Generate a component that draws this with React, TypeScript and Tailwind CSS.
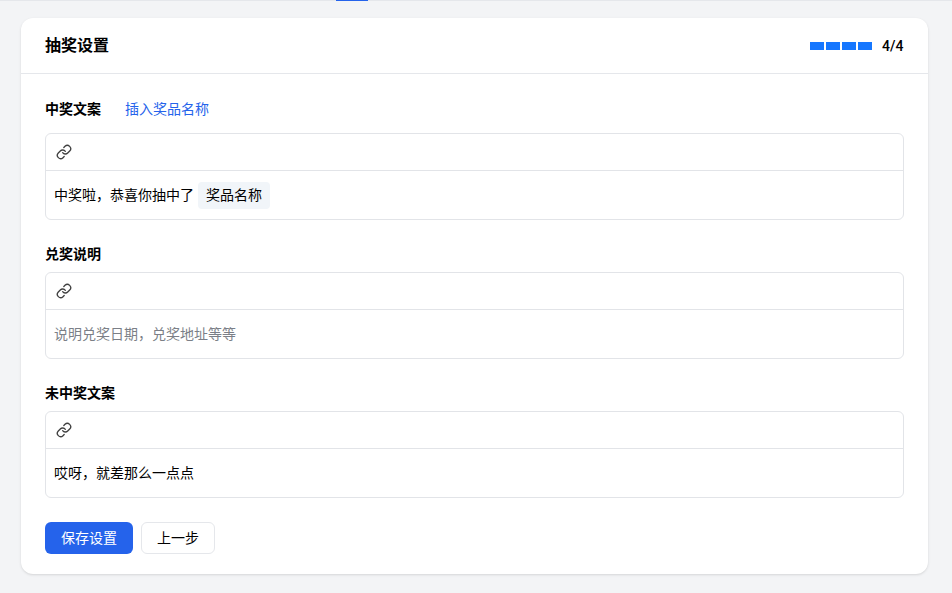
import React from "react";

function LinkIcon() {
  return (
    <svg width="16" height="16" viewBox="0 0 24 24" fill="none" stroke="#404040" strokeWidth="2" strokeLinecap="round" strokeLinejoin="round">
      <path d="M10 13a5 5 0 0 0 7.54.54l3-3a5 5 0 0 0-7.07-7.07l-1.72 1.71" />
      <path d="M14 11a5 5 0 0 0-7.54-.54l-3 3a5 5 0 0 0 7.07 7.07l1.71-1.71" />
    </svg>
  );
}

function Editor({ children }: { children: React.ReactNode }) {
  return (
    <div className="border border-[#e2e4e8] rounded-md bg-white">
      <div className="h-[37px] border-b border-[#e2e4e8] flex items-center px-[10px]">
        <LinkIcon />
      </div>
      <div className="h-[48px] flex items-center px-2 text-sm text-black">{children}</div>
    </div>
  );
}

export default function App() {
  return (
    <div
      className="min-h-[593px] bg-[#f3f4f6] overflow-hidden subpixel-antialiased"
      style={{ fontFamily: '"Roboto", "Noto Sans CJK SC", sans-serif' }}
    >
      <div className="h-px bg-[#e5e7eb]">
        <div className="h-px w-8 ml-[336px] bg-[#2563eb]" />
      </div>
      <div className="mx-[21px] mt-[17px] w-[907px] h-[556px] bg-white rounded-xl shadow-sm">
        <div className="h-[56px] border-b border-[#e5e7eb] flex items-center justify-between px-6">
          <h2 className="text-base font-semibold text-black">抽奖设置</h2>
          <div className="flex items-center gap-[10px]">
            <div className="flex gap-0.5">
              <span className="w-3.5 h-2 bg-[#1677ff]" />
              <span className="w-3.5 h-2 bg-[#1677ff]" />
              <span className="w-3.5 h-2 bg-[#1677ff]" />
              <span className="w-3.5 h-2 bg-[#1677ff]" />
            </div>
            <span className="w-[22px] text-sm font-medium text-black">4/4</span>
          </div>
        </div>
        <div className="px-6 pt-[25px]">
          <div className="h-5 mb-[14px] flex items-center gap-6 text-sm">
            <span className="font-semibold text-black">中奖文案</span>
            <span className="text-[#2563eb]">插入奖品名称</span>
          </div>
          <Editor>
            <span>中奖啦，恭喜你抽中了</span>
            <span className="ml-1 px-2 h-[27px] flex items-center bg-[#f1f5f9] rounded">奖品名称</span>
          </Editor>
          <div className="h-5 mt-6 mb-2 flex items-center text-sm font-semibold text-black">兑奖说明</div>
          <Editor>
            <span className="text-[#7b7f87]">说明兑奖日期，兑奖地址等等</span>
          </Editor>
          <div className="h-5 mt-6 mb-2 flex items-center text-sm font-semibold text-black">未中奖文案</div>
          <Editor>
            <span>哎呀，就差那么一点点</span>
          </Editor>
          <div className="flex gap-2 mt-6">
            <button className="h-8 w-[88px] rounded-md bg-[#2563eb] text-white text-sm">保存设置</button>
            <button className="h-8 w-[74px] rounded-md border border-[#e5e7eb] bg-white text-sm text-black">上一步</button>
          </div>
        </div>
      </div>
    </div>
  );
}
